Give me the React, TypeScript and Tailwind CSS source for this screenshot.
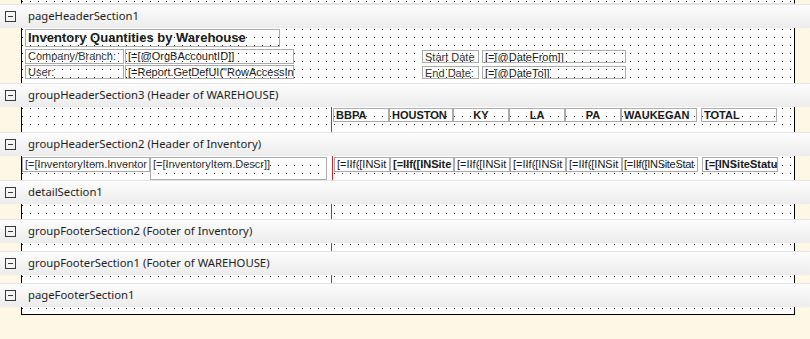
import React from "react";

// dotted design-surface grid, 8px pitch
const dots =
  "bg-[#222] bg-[image:linear-gradient(90deg,transparent_1px,#fff_1px),linear-gradient(180deg,transparent_1px,#fff_1px)] bg-[length:8px_8px] bg-[position:0_1px]";

function SectionHeader({ title }: { title: string }) {
  return (
    <div className="flex h-[24px] items-center border-t border-[#e4e4e4] bg-linear-to-b from-[#fdfdfd] to-[#ececec]">
      <span className="ml-[5px] flex h-[11px] w-[11px] items-center justify-center border border-[#3a3a3a]">
        <span className="h-px w-[5px] bg-[#3a3a3a]" />
      </span>
      <span className="ml-[12px] font-['Noto_Sans',sans-serif] text-[11.3px] text-[#1e1e1e]">
        {title}
      </span>
    </div>
  );
}

function Band({
  className,
  children,
}: {
  className: string;
  children?: React.ReactNode;
}) {
  return (
    <div
      className={`ml-[21px] w-[774px] border-x border-black ${dots} ${className}`}
    >
      {children}
    </div>
  );
}

function Field({
  className,
  bold,
  center,
  children,
}: {
  className: string;
  bold?: boolean;
  center?: boolean;
  children: React.ReactNode;
}) {
  return (
    <div
      className={`shrink-0 overflow-hidden whitespace-nowrap border border-[#ababab] px-[2px] font-['Liberation_Sans',Arial,sans-serif] text-[11px] leading-[12px] text-[#1a1a1a] ${
        bold ? "font-bold" : ""
      } ${center ? "text-center" : ""} ${className}`}
    >
      {children}
    </div>
  );
}

function RedLine() {
  return <div className="w-px shrink-0 self-stretch bg-[#d2232a]" />;
}

const warehouses = [
  { label: "BBPA", w: "w-[56px]", center: false },
  { label: "HOUSTON", w: "w-[64px]", center: false },
  { label: "KY", w: "w-[56px]", center: true },
  { label: "LA", w: "w-[56px]", center: true },
  { label: "PA", w: "w-[56px]", center: true },
  { label: "WAUKEGAN", w: "w-[76px]", center: false },
];

const cells = [
  { label: "[=IIf([INSit", w: "w-[56px]", bold: false },
  { label: "[=IIf([INSite", w: "w-[64px]", bold: true },
  { label: "[=IIf([INSit", w: "w-[56px]", bold: false },
  { label: "[=IIf([INSit", w: "w-[56px]", bold: false },
  { label: "[=IIf([INSit", w: "w-[56px]", bold: false },
  { label: "[=IIf([INSiteStat", w: "w-[76px] px-px tracking-[-0.3px]", bold: false },
];

export default function App() {
  return (
    <div className="h-[339px] w-[810px] overflow-hidden bg-[#fdf8e6]">
      {/* tail of the section above */}
      <Band className="h-[4px] border-b border-b-[#e2e2e2]" />

      <SectionHeader title="pageHeaderSection1" />
      <Band className="flex h-[55px] flex-col pl-[3px] pt-px">
        <Field className="h-[18px] w-[255px] text-[13px] leading-[16px]" bold>
          Inventory Quantities by Warehouse
        </Field>
        <div className="mt-[2px] flex h-[15px]">
          <Field className="w-[99px] text-[#333]">Company/Branch:</Field>
          <Field className="ml-px w-[169px]">[=[@OrgBAccountID]]</Field>
          <Field className="ml-[128px] mt-px h-[13px] w-[57px] text-[#333]">
            Start Date
          </Field>
          <Field className="ml-[3px] mt-px h-[13px] w-[144px]">
            [=[@DateFrom]]
          </Field>
        </div>
        <div className="mt-px flex h-[14px]">
          <Field className="w-[99px] text-[#333]">User:</Field>
          <Field className="ml-px w-[169px]">
            [=Report.GetDefUI(&quot;RowAccessIn
          </Field>
          <Field className="ml-[128px] mt-px h-[13px] w-[57px] text-[#333]">
            End Date:
          </Field>
          <Field className="ml-[3px] mt-px h-[13px] w-[144px]">
            [=[@DateTo]]
          </Field>
        </div>
      </Band>

      <SectionHeader title="groupHeaderSection3 (Header of WAREHOUSE)" />
      <Band className="flex h-[25px]">
        <div className="w-[309px] shrink-0" />
        <RedLine />
        <div className="ml-px mt-px flex h-[14px]">
          {warehouses.map((h) => (
            <Field key={h.label} className={h.w} bold center={h.center}>
              {h.label}
            </Field>
          ))}
          <Field className="ml-[4px] w-[76px]" bold>
            TOTAL
          </Field>
        </div>
      </Band>

      <SectionHeader title="groupHeaderSection2 (Header of Inventory)" />
      <Band className="flex h-[24px]">
        <Field className="mt-px h-[15px] w-[128px] text-[#333]">
          [=[InventoryItem.Inventor
        </Field>
        <Field className="mt-px h-[23px] w-[177px] text-[#333]">
          [=[InventoryItem.Descr]]
        </Field>
        <div className="w-[5px] shrink-0" />
        <RedLine />
        <div className="ml-px mt-px flex h-[15px]">
          {cells.map((c, i) => (
            <Field key={i} className={c.w} bold={c.bold}>
              {c.label}
            </Field>
          ))}
          <Field className="ml-[4px] w-[76px]" bold>
            [=[INSiteStatu
          </Field>
        </div>
      </Band>

      <SectionHeader title="detailSection1" />
      <Band className="flex h-[15px]">
        <div className="w-[309px] shrink-0" />
        <RedLine />
      </Band>

      <SectionHeader title="groupFooterSection2 (Footer of Inventory)" />
      <Band className="flex h-[8px]">
        <div className="w-[309px] shrink-0" />
        <RedLine />
      </Band>

      <SectionHeader title="groupFooterSection1 (Footer of WAREHOUSE)" />
      <Band className="flex h-[8px]">
        <div className="w-[309px] shrink-0" />
        <RedLine />
      </Band>

      <SectionHeader title="pageFooterSection1" />
      <Band className="h-[8px] border-b border-b-black" />
    </div>
  );
}
